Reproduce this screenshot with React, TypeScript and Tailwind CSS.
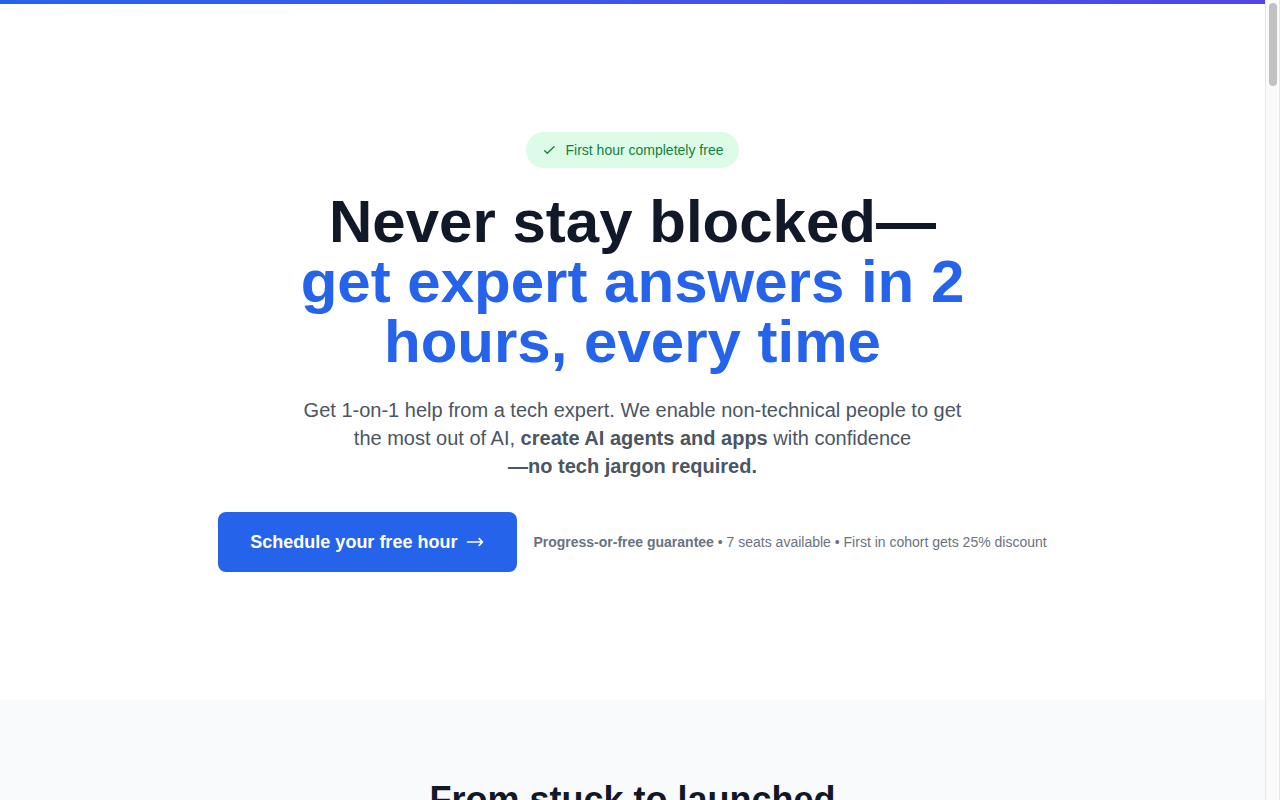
export default function App() {
  return (
    <div className="flex h-screen overflow-hidden bg-white font-['Liberation_Sans',Arial,sans-serif]">
      <main className="min-w-0 flex-1 overflow-hidden">
        <div className="h-1 bg-linear-to-r from-[#2563eb] to-[#4f46e5]" />

        <section className="flex flex-col items-center px-6 py-32 text-center">
          <div className="flex items-center rounded-full bg-[#dcfce7] px-4 py-2 text-sm text-[#15803d]">
            <svg
              className="mr-2 size-4"
              viewBox="0 0 24 24"
              fill="none"
              stroke="currentColor"
              strokeWidth="2"
              strokeLinecap="round"
              strokeLinejoin="round"
              aria-hidden="true"
            >
              <path d="M4 13l4 4L18 7" />
            </svg>
            First hour completely free
          </div>

          <h1 className="mt-6 max-w-3xl text-6xl/[60px] font-bold text-[#111827]">
            Never stay blocked—
            <span className="block text-[#2563eb]">
              get expert answers in 2<br />
              hours, every time
            </span>
          </h1>

          <p className="mt-6 max-w-3xl text-xl/7 text-[#4b5563]">
            Get 1-on-1 help from a tech expert. We enable non-technical people to get
            <br />
            the most out of AI, <strong>create AI agents and apps</strong> with confidence
            <br />
            <strong>—no tech jargon required.</strong>
          </p>

          <div className="mt-8 flex items-center justify-center gap-4">
            <a
              href="#schedule"
              className="flex items-center rounded-lg bg-[#2563eb] px-8 py-4 text-lg/7 font-semibold text-white"
            >
              Schedule your free hour
              <svg
                className="ml-2 size-5"
                viewBox="0 0 24 24"
                fill="none"
                stroke="currentColor"
                strokeWidth="2"
                strokeLinecap="round"
                strokeLinejoin="round"
                aria-hidden="true"
              >
                <path d="M17 8l4 4m0 0l-4 4m4-4H3" />
              </svg>
            </a>
            <p className="text-sm text-[#6b7280]">
              <strong>Progress-or-free guarantee</strong> • 7 seats available • First in cohort gets
              25% discount
            </p>
          </div>
        </section>

        <section className="bg-[#f9fafb] px-6 py-20 text-center">
          <h2 className="text-4xl/10 font-bold text-[#111827]">From stuck to launched</h2>
        </section>
      </main>

      <div
        className="flex w-[15px] shrink-0 justify-center border-x border-[#e8e8e8] bg-[#fafafa] pt-[3px]"
        aria-hidden="true"
      >
        <div className="h-[83px] w-2 rounded-full bg-[#c1c1c1]" />
      </div>
    </div>
  );
}
